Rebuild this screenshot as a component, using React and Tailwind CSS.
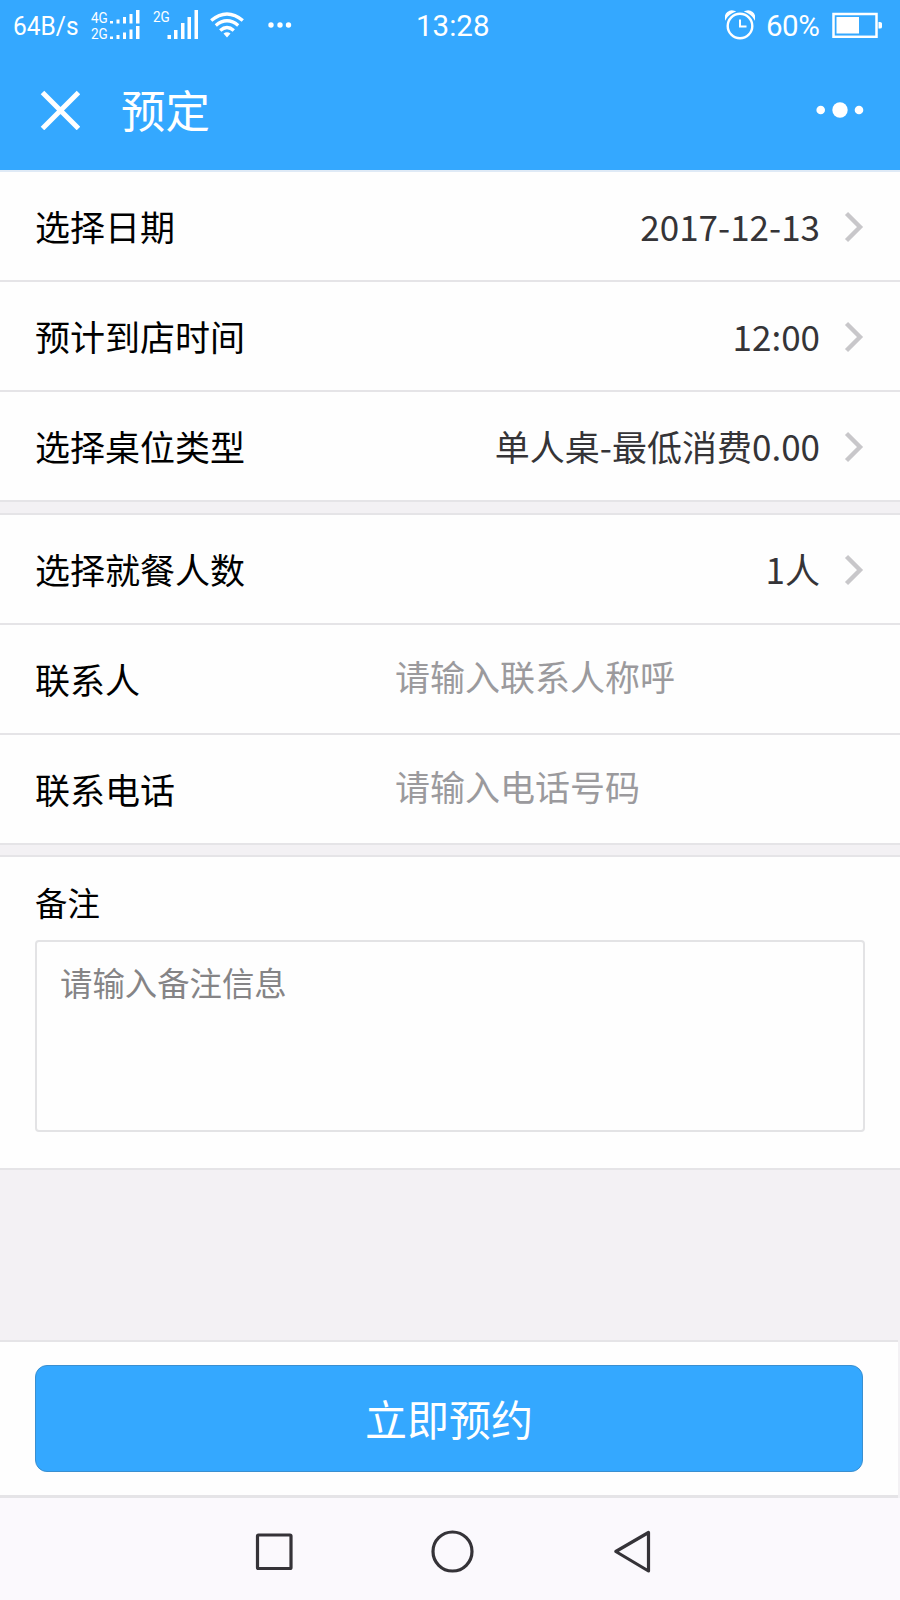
const selectRows = [
  { label: '选择日期', value: '2017-12-13' },
  { label: '预计到店时间', value: '12:00' },
  { label: '选择桌位类型', value: '单人桌-最低消费0.00' },
];

export default function App() {
  return (
    <div className="flex flex-col w-[900px] h-[1600px] overflow-hidden bg-[#f3f1f4] text-[35px] text-black font-['Noto_Sans_CJK_SC',sans-serif]">
      <header className="h-[172px] shrink-0 bg-[#34a8ff] border-b-2 border-[#dfeaf6] text-white">
        <StatusBar />
        <div className="flex items-center h-[120px]">
          <svg className="ml-10 w-10 h-10" viewBox="0 0 40 40" fill="none" stroke="currentColor" strokeWidth="5">
            <path d="M2.5 2.5L38.5 38.5M38.5 2.5L2.5 38.5" />
          </svg>
          <h1 className="ml-[41px] pb-[1px] text-[44.5px] leading-none">预定</h1>
          <svg className="ml-auto mr-9 w-12 h-4" viewBox="0 0 48 16" fill="currentColor">
            <circle cx="4.7" cy="8" r="4.3" />
            <circle cx="24" cy="8" r="7.7" />
            <circle cx="43" cy="8" r="4.3" />
          </svg>
        </div>
      </header>

      <section className="bg-[#fefefe]">
        {selectRows.map((row) => (
          <SelectRow key={row.label} label={row.label} value={row.value} />
        ))}
      </section>

      <section className="mt-[11px] bg-[#fefefe] border-t-2 border-[#e5e4e7]">
        <SelectRow label="选择就餐人数" value="1人" />
        <InputRow label="联系人" placeholder="请输入联系人称呼" />
        <InputRow label="联系电话" placeholder="请输入电话号码" />
      </section>

      <section className="mt-[10px] h-[315px] bg-[#fefefe] border-y-2 border-[#e5e4e7] px-[35px] pt-[25px]">
        <div className="h-[58px] text-[32.4px] leading-[40px]">备注</div>
        <textarea
          className="block w-[830px] h-[192px] resize-none rounded-[4px] border-2 border-[#e3e3e5] px-[23px] pt-[18px] text-[32.4px] leading-[44px] placeholder:text-[#858486] outline-none"
          placeholder="请输入备注信息"
        />
      </section>

      <footer className="mt-auto">
        <div className="w-[898px] h-[158px] bg-[#fefefe] border-t-2 border-b-3 border-[#e5e4e7] pl-[35px] pt-[23px]">
          <button className="flex items-center justify-center w-[828px] h-[107px] pb-[2px] rounded-xl border border-[#3a8fd0] bg-[#34a8ff] text-[42px] leading-none text-white">
            立即预约
          </button>
        </div>
        <NavBar />
      </footer>
    </div>
  );
}

function SelectRow({ label, value }) {
  return (
    <div className="flex items-center h-[110px] pl-[35px] pr-9 border-b-2 border-[#e5e4e7]">
      <span className="pb-[2px] leading-none">{label}</span>
      <span className="ml-auto pb-[2px] leading-none text-[#353437]">{value}</span>
      <svg className="ml-6 mt-[2px] w-5 h-8" viewBox="0 0 20 32" fill="none" stroke="#c8c7ca" strokeWidth="4.4">
        <path d="M2.5 2.5L16 16L2.5 29.5" />
      </svg>
    </div>
  );
}

function InputRow({ label, placeholder }) {
  return (
    <div className="flex items-center h-[110px] pl-[35px] border-b-2 border-[#e5e4e7]">
      <span className="w-[360px] pb-[2px] leading-none">{label}</span>
      <input
        className="w-[460px] h-[60px] mb-[8px] placeholder:text-[#9b9a9d] outline-none"
        placeholder={placeholder}
      />
    </div>
  );
}

function StatusBar() {
  return (
    <div className="flex items-center h-[50px] pl-[13px] pr-[18px] font-[Roboto,sans-serif] leading-none">
      <span className="w-[78px] mt-[2px] text-[24.5px] origin-left scale-y-108">64B/s</span>
      <div className="flex flex-col w-[19px] text-[13.5px] leading-[16px]">
        <span className="scale-y-115">4G</span>
        <span className="scale-y-115">2G</span>
      </div>
      {/* dual sim signal */}
      <svg className="w-[30px] h-[30px]" viewBox="0 0 30 30" fill="currentColor">
        <path d="M0 11h3v2.5H0zM6.5 9.5h3v4h-3zM13 7h3v6.5h-3zM19.5 4h3v9.5h-3zM26 0h3.5v13.5H26z" />
        <path d="M0 26.5h3V29H0zM6.5 25h3v4h-3zM13 22.5h3V29h-3zM19.5 19.5h3V29h-3zM26 16h3.5v13H26z" />
      </svg>
      <span className="ml-[13px] mb-[17px] w-[14px] text-[13.5px] scale-y-115">2G</span>
      <svg className="w-8 h-[30px]" viewBox="0 0 32 30" fill="currentColor">
        <path d="M.5 25H4v4H.5zM7 20h3.5v9H7zM14 13h3.5v16H14zM20.500 7H24v22h-3.5zM27.5 0H31v29h-3.5z" />
      </svg>
      <svg className="ml-[11px] w-[34px] h-[26px]" viewBox="0 0 34 26" fill="none" stroke="currentColor" strokeWidth="3.4">
        <path d="M1.2 8.5Q17 -4.5 32.8 8.5M5.8 13.5Q17 4.2 28.2 13.5M10.2 18.5Q17 12.5 23.8 18.5" />
        <path d="M13.5 21.5Q17 19 20.5 21.5L17 25.5z" fill="currentColor" stroke="none" />
      </svg>
      <svg className="ml-6 w-6 h-2" viewBox="0 0 24 8" fill="currentColor">
        <circle cx="3" cy="4" r="2.7" />
        <circle cx="12" cy="4" r="2.7" />
        <circle cx="20.5" cy="4" r="2.7" />
      </svg>
      <span className="ml-[124px] mt-[4px] text-[29.5px]">13:28</span>
      <svg className="ml-auto w-[30px] h-[30px]" viewBox="0 0 30 30" fill="none" stroke="currentColor" strokeWidth="2.4">
        <circle cx="15" cy="16" r="12.3" />
        <path d="M15 9.5V16.5H21.5" strokeWidth="2" />
        <path d="M.5 8.5A6.500 6.500 0 0 1 9 1.500Q3.500 3.500 .5 8.500zM29.500 8.500A6.500 6.500 0 0 0 21 1.500Q26.500 3.500 29.500 8.500z" fill="currentColor" strokeWidth="1.5" />
      </svg>
      <span className="ml-[11px] mt-[3px] w-[55px] text-[29.5px] tracking-[-0.5px]">60%</span>
      <svg className="ml-[11px] w-[50px] h-[26px]" viewBox="0 0 50 26" fill="none" stroke="currentColor" strokeWidth="2.5">
        <rect x="1.5" y="2" width="43" height="22.8" />
        <path d="M4.5 5H27v16.5H4.5zM46.5 10H48q2 0 2 1.5V15q0 1.5-2 1.5h-1.5z" fill="currentColor" stroke="none" />
      </svg>
    </div>
  );
}

function NavBar() {
  return (
    <nav className="flex items-center h-[102px] pl-[255px] bg-[#fbf9fd] text-[#353338]">
      <svg className="w-[38px] h-[38px] mt-[6px]" viewBox="0 0 38 38" fill="none" stroke="currentColor" strokeWidth="3.2">
        <rect x="2.5" y="2" width="33.5" height="33.5" rx="1" />
      </svg>
      <svg className="ml-[138px] w-[44px] h-[44px] mt-[6px]" viewBox="0 0 44 44" fill="none" stroke="currentColor" strokeWidth="3.2">
        <circle cx="21.5" cy="21.5" r="19.5" />
      </svg>
      <svg className="ml-[138px] w-[38px] h-[44px] mt-[6px]" viewBox="0 0 38 44" fill="none" stroke="currentColor" strokeWidth="3.2" strokeLinejoin="round">
        <path d="M2.8 21.5L35.5 2.5V41z" />
      </svg>
    </nav>
  );
}
